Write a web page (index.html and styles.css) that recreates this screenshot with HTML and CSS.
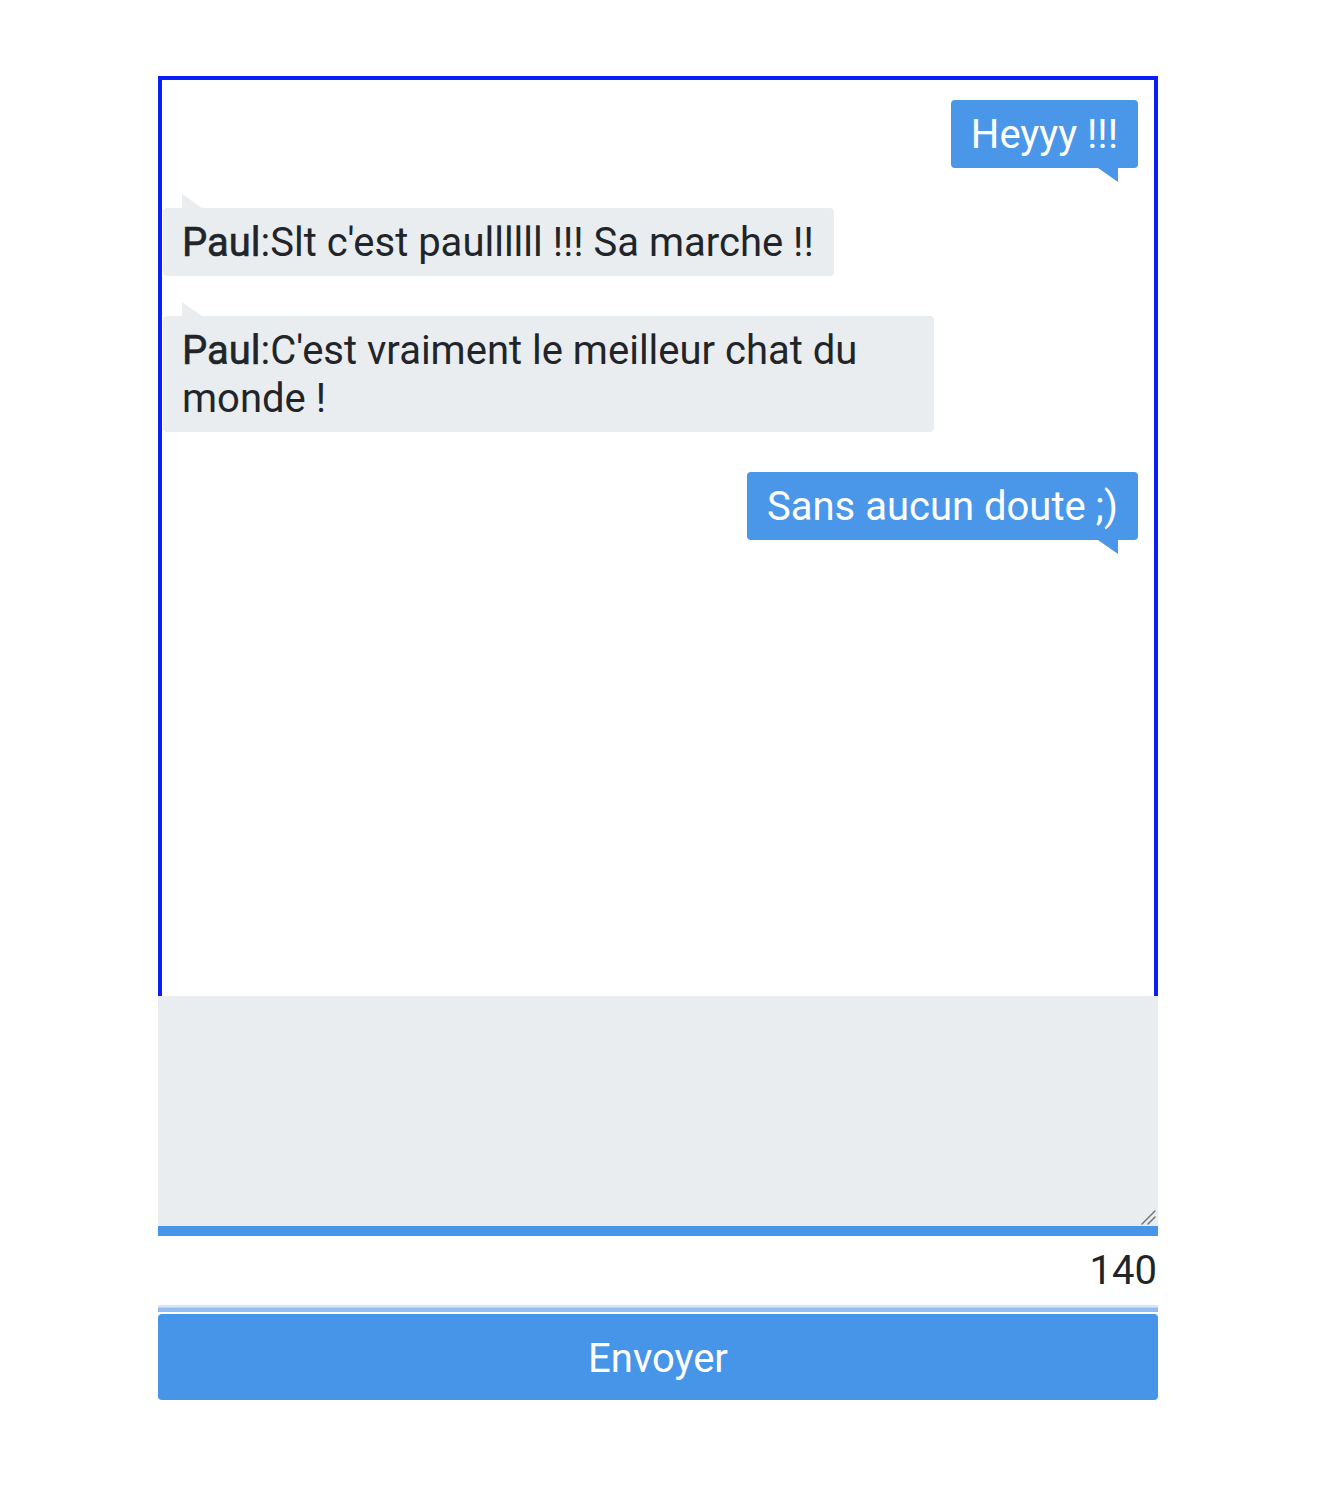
FILE: index.html
```html
<!DOCTYPE html>
<html lang="fr">
<head>
<meta charset="utf-8">
<title>Chat</title>
<link rel="stylesheet" href="styles.css">
</head>
<body>
<div class="page">
  <div class="chat">
    <div class="messages">
      <div class="msg msg-me">Heyyy !!!</div>
      <div class="msg msg-other"><span class="author">Paul</span>:Slt c'est paullllll !!! Sa marche !!</div>
      <div class="msg msg-other msg-wide"><span class="author">Paul</span>:C'est vraiment le meilleur chat du monde !</div>
      <div class="msg msg-me">Sans aucun doute ;)</div>
    </div>
  </div>
  <div class="input-wrap">
    <textarea class="input"></textarea>
    <svg class="grip" width="16" height="16" viewBox="0 0 16 16" aria-hidden="true">
      <line x1="15" y1="2" x2="2" y2="15" stroke="#6b6e72" stroke-width="1.4" stroke-linecap="round"/>
      <line x1="15" y1="8" x2="8" y2="15" stroke="#6b6e72" stroke-width="1.4" stroke-linecap="round"/>
    </svg>
  </div>
  <div class="counter">140</div>
  <div class="progress"></div>
  <button class="send" type="button">Envoyer</button>
</div>
</body>
</html>
```

FILE: styles.css
```css
html, body {
  margin: 0;
  padding: 0;
  background: #ffffff;
}

body {
  font-family: Roboto, "Liberation Sans", Arial, sans-serif;
  color: #212529;
}

.page {
  width: 1000px;
  padding: 76px 0 0 158px;
}

.chat {
  box-sizing: border-box;
  height: 920px;
  border: 4px solid #0a1ff8;
  border-bottom: none;
  padding: 20px 16px 0 1px;
}

.messages {
  display: flex;
  flex-direction: column;
  gap: 40px;
}

.msg {
  position: relative;
  font-size: 40px;
  line-height: 48px;
  padding: 11px 20px 9px;
  border-radius: 4px;
}

.msg-me {
  align-self: flex-end;
  background: #4a97ea;
  color: #ffffff;
}

.msg-me::after {
  content: "";
  position: absolute;
  right: 20px;
  bottom: -14px;
  width: 0;
  height: 0;
  border-top: 14px solid #4a97ea;
  border-left: 20px solid transparent;
}

.msg-other {
  align-self: flex-start;
  background: #eaedf0;
  color: #212529;
  padding-left: 19px;
}

.msg-other::before {
  content: "";
  position: absolute;
  left: 19px;
  top: -14px;
  width: 0;
  height: 0;
  border-bottom: 14px solid #eaedf0;
  border-right: 20px solid transparent;
}

.msg-wide {
  max-width: 732px;
}

.author {
  font-weight: 400;
  -webkit-text-stroke: 0.6px #212529;
}

.input-wrap {
  position: relative;
}

.input {
  display: block;
  box-sizing: border-box;
  width: 1000px;
  height: 240px;
  margin: 0;
  padding: 10px;
  border: none;
  border-bottom: 10px solid #4695e8;
  background: #eaedf0;
  font-family: Roboto, "Liberation Sans", Arial, sans-serif;
  font-size: 40px;
  resize: none;
  outline: none;
}

.grip {
  position: absolute;
  right: 2px;
  bottom: 11px;
}

.counter {
  text-align: right;
  font-size: 40px;
  line-height: 48px;
  padding: 11px 1px 10px 0;
  color: #212529;
}

.progress {
  height: 8px;
  background: linear-gradient(to bottom, #d6e6fa 0, #d6e6fa 2px, #bcd6f7 2px, #bcd6f7 3px, #93bdf2 3px, #93bdf2 7px, #ffffff 7px);
  margin-bottom: 1px;
}

.send {
  display: block;
  width: 1000px;
  height: 86px;
  margin: 0;
  padding: 2px 0 0;
  border: none;
  border-radius: 4px;
  background: #4695e8;
  color: #ffffff;
  font-family: Roboto, "Liberation Sans", Arial, sans-serif;
  font-size: 40px;
  cursor: pointer;
}
```
